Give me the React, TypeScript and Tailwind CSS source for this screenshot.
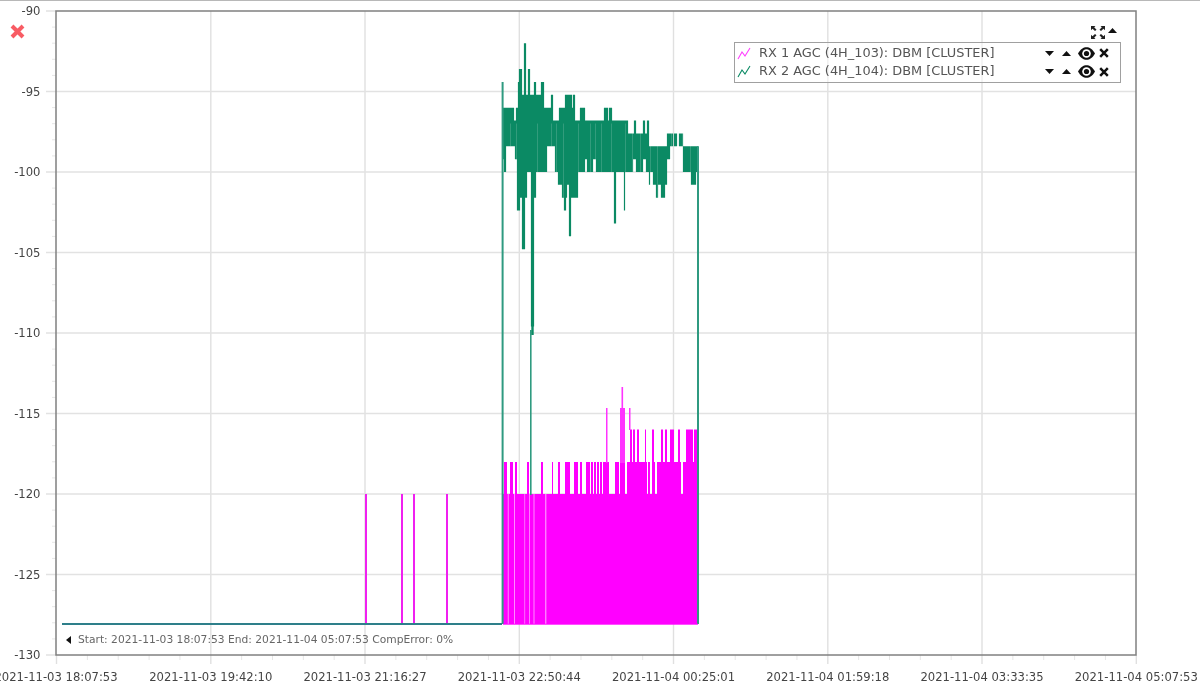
import React from "react";

const L = (n: number) => 43.3 + 12.87 * n;
type Span = [number, number, number];

const greenTop: Span[] = [
  [502,503,3],[503,514,5],[514,516,6],[516,518,5],[518,519,3],[519,522,2],[522,524,4],[524,526,0],[526,528,4],[528,530,2],
  [530,534,4],[534,536,3],[536,541,4],[541,544,3],[544,545,5],[545,551,5],[551,553,4],[553,559,6],[559,565,5],[565,572,4],
  [572,573,5],[573,575,4],[575,580,6],[580,585,5],[585,604,6],[604,608,5],[608,609,6],[609,612,5],[612,628,6],[628,634,7],
  [634,636,6],[636,643,7],[643,645,6],[645,647,7],[647,649,6],[649,667,8],[667,673,7],[673,674,8],[674,677,7],[677,679,8],
  [679,683,7],[683,699,8],
];
const greenBottom: Span[] = [
  [503,504,9],[504,506,10],[506,515,8],[515,517,9],[517,520,13],[520,522,12],[522,525,16],[525,527,12],[527,531,10],[531,534,22],
  [534,536,12],[536,538,10],[538,545,10],[545,547,10],[547,555,8],[555,558,10],[558,562,11],[562,564,12],[564,566,13],
  [566,567,12],[567,569,11],[569,571,15],[571,578,12],[578,583,10],[583,585,10],[585,587,9],[587,592,10],[592,593,10],[593,596,9],[596,603,10],[603,614,10],
  [614,616,14],[616,624,10],[624,625,13],[625,631,10],[631,633,10],[633,636,9],[636,643,10],[643,646,9],[646,649,10],[649,650,11],[650,653,10],
  [653,656,11],[656,658,12],[658,661,11],[661,665,12],[665,667,11],[667,670,9],[670,683,8],[683,691,10],[691,696,11],[696,698,10],
];
const lookup = (spans: Span[], x: number, fallback: number) => {
  const s = spans.find((v) => x >= v[0] && x < v[1]);
  return s ? s[2] : fallback;
};

let greenPath = "";
for (let x = 503; x < 698; x++) {
  greenPath += `M${x + 0.5} ${L(lookup(greenTop, x, 6))}V${L(lookup(greenBottom, x, 9))}`;
}

const greenStreaks = [510, 516, 537, 551, 556, 563, 578, 590, 595, 601, 611, 625, 632, 640, 650, 657, 671, 682, 690];

const spikes118: [number, number][] = [
  [504,507],[510,513],[515,517],[527,529],[541,543],[552,553],[558,560],[565,570],[574,578],[580,582],[586,590],[591,593],[594,596],
  [597,599],[600,602],[603,609],[615,619],[620,625],[627,647],[648,650],[652,655],[657,681],[683,698],
];
const spikes116: [number, number][] = [
  [630,632],[633,635],[637,639],[645,646],[652,654],[661,663],[665,667],[670,674],[678,680],[686,693],[694,697],
];
const magentaGaps: [number, number][] = [
  [507.8,508.6],[514.2,515],[524.5,525.1],[529.2,529.9],[533.6,534.4],[545.3,546.3],
];

const xMajor = [56.5, 210.8, 365, 519.3, 673.5, 827.8, 982, 1136.3];
const xLabels = [
  "2021-11-03 18:07:53","2021-11-03 19:42:10","2021-11-03 21:16:27","2021-11-03 22:50:44",
  "2021-11-04 00:25:01","2021-11-04 01:59:18","2021-11-04 03:33:35","2021-11-04 05:07:53",
];
const yVals = [-90,-95,-100,-105,-110,-115,-120,-125,-130];
const yOf = (i: number) => 11 + i * 80.5;

function Chart() {
  const minorX: number[] = [];
  for (let i = 0; i < 7; i++) for (let j = 1; j < 5; j++) minorX.push(xMajor[i] + (j * (xMajor[i + 1] - xMajor[i])) / 5);
  const minorY: number[] = [];
  for (let i = 0; i < 8; i++) for (let j = 1; j < 5; j++) minorY.push(yOf(i) + j * 16.1);
  return (
    <svg width="1200" height="685" viewBox="0 0 1200 685" className="block font-['DejaVu_Sans',sans-serif]">
      {xMajor.slice(1, -1).map((x) => (
        <line key={x} x1={x} x2={x} y1={11} y2={664} stroke="#e0e0e0" strokeWidth="1.4" />
      ))}
      {yVals.slice(1, -1).map((_, i) => (
        <line key={i} x1={46} x2={1136} y1={yOf(i + 1)} y2={yOf(i + 1)} stroke="#e2e2e2" strokeWidth="1.4" />
      ))}
      <line x1={46} x2={56} y1={11} y2={11} stroke="#e0e0e0" strokeWidth="1.4" />
      <line x1={46} x2={56} y1={655} y2={655} stroke="#e0e0e0" strokeWidth="1.4" />
      {minorY.map((y) => (
        <line key={y} x1={52} x2={56} y1={y} y2={y} stroke="#e6e6e6" />
      ))}
      {minorX.map((x) => (
        <line key={x} x1={x} x2={x} y1={655} y2={660} stroke="#e6e6e6" />
      ))}
      <line x1={56.5} x2={56.5} y1={655} y2={664} stroke="#e0e0e0" strokeWidth="1.4" />
      <line x1={1136.3} x2={1136.3} y1={655} y2={664} stroke="#e0e0e0" strokeWidth="1.4" />

      {/* magenta series */}
      <rect x={503} y={494} width={195} height={130} fill="#ff00ff" />
      {magentaGaps.map(([a, b]) => (
        <rect key={a} x={a} y={494} width={b - a} height={130} fill="#ffb0ff" />
      ))}
      {spikes118.map(([a, b]) => (
        <rect key={a} x={a} y={462} width={b - a} height={32} fill="#ff00ff" />
      ))}
      {spikes116.map(([a, b]) => (
        <rect key={a} x={a} y={429.5} width={b - a} height={33} fill="#ff00ff" />
      ))}
      <rect x={606} y={408} width={1.5} height={55} fill="#ff33ff" />
      <rect x={620} y={408} width={5} height={55} fill="#ff33ff" />
      <rect x={621.5} y={387} width={1.6} height={22} fill="#ff33ff" />
      <rect x={629} y={408} width={1.5} height={22} fill="#ff33ff" />
      {[366, 402, 414, 447].map((x) => (
        <rect key={x} x={x - 1} y={494} width={2} height={130} fill="#f020f0" />
      ))}

      {/* green series */}
      <path d={greenPath} stroke="#0b8a64" strokeWidth="1.2" fill="none" />
      {greenStreaks.map((x) => (
        <line key={x} x1={x + 0.5} x2={x + 0.5} y1={L(6) + 3} y2={L(lookup(greenBottom, x, 9))} stroke="#ffffff" strokeOpacity="0.16" />
      ))}
      <line x1={502.6} x2={502.6} y1={L(3)} y2={624} stroke="#2f9a80" strokeWidth="2" />
      <line x1={698} x2={698} y1={L(8)} y2={624} stroke="#2f9a80" strokeWidth="2" />
      <line x1={530.8} x2={530.8} y1={330} y2={495} stroke="#2f9a80" strokeWidth="1.6" />
      <line x1={532.5} x2={532.5} y1={240} y2={335} stroke="#0b8a64" strokeWidth="2.4" />
      <line x1={62} x2={502} y1={624} y2={624} stroke="#2e7f8a" strokeWidth="2" />
      <line x1={503} x2={698} y1={624.2} y2={624.2} stroke="#ff00ff" strokeWidth="1" />

      {/* frame */}
      <rect x={56} y={11} width={1080} height={644} fill="none" stroke="#808080" strokeWidth="1.5" />

      {yVals.map((v, i) => (
        <text key={v} x={40.5} y={yOf(i) + 4.2} textAnchor="end" fontSize="11.6" fill="#444444">{v}</text>
      ))}
      {xLabels.map((t, i) => (
        <text key={t} x={i === 0 ? 56 : xMajor[i]} y={681} textAnchor="middle" fontSize="11.6" fill="#444444">{t}</text>
      ))}
    </svg>
  );
}

const CaretDown = () => (
  <svg width="9" height="5" viewBox="0 0 9 5" className="block"><path d="M0 0H9L4.5 5Z" fill="#111" /></svg>
);
const CaretUp = () => (
  <svg width="9" height="5" viewBox="0 0 9 5" className="block"><path d="M0 5H9L4.5 0Z" fill="#111" /></svg>
);
const Eye = () => (
  <svg width="17" height="13" viewBox="0 0 17 13" className="block">
    <path d="M0 6.5C2.5 2 5.5 0.2 8.5 0.2S14.5 2 17 6.5C14.5 11 11.5 12.8 8.5 12.8S2.5 11 0 6.5Z" fill="#111" />
    <circle cx="8.5" cy="6.5" r="4.3" fill="#fff" />
    <circle cx="8.5" cy="6.5" r="2.6" fill="#111" />
  </svg>
);
const Cross = () => (
  <svg width="10" height="10" viewBox="0 0 10 10" className="block">
    <path d="M1.2 1.2L8.8 8.8M8.8 1.2L1.2 8.8" stroke="#111" strokeWidth="2.5" />
  </svg>
);
const Expand = () => (
  <svg width="14" height="13" viewBox="0 0 14 13" className="block">
    <path d="M0 0H4.5L3.2 1.3L5.5 3.8L4 5L1.5 2.8L0 4.2ZM14 0H9.5L10.8 1.3L8.5 3.8L10 5L12.5 2.8L14 4.2ZM0 13H4.5L3.2 11.7L5.5 9.2L4 8L1.5 10.2L0 8.8ZM14 13H9.5L10.8 11.7L8.5 9.2L10 8L12.5 10.2L14 8.8Z" fill="#222" />
  </svg>
);
const Spark = ({ color }: { color: string }) => (
  <svg width="14" height="13" viewBox="0 0 14 13" className="block">
    <path d="M1 12L5 5L8 9L13 1" fill="none" stroke={color} strokeWidth="1.1" />
  </svg>
);

function LegendRow({ color, label }: { color: string; label: string }) {
  return (
    <div className="flex h-[18.5px] items-center">
      <div className="ml-[2px] w-[22px]"><Spark color={color} /></div>
      <span className="w-[286px] whitespace-nowrap text-[12.9px] leading-none text-[#555555]">{label}</span>
      <div className="flex w-[17px]"><CaretDown /></div>
      <div className="flex w-[16px]"><CaretUp /></div>
      <div className="mr-[4px]"><Eye /></div>
      <Cross />
    </div>
  );
}

export default function App() {
  return (
    <div className="relative h-[685px] w-[1200px] overflow-hidden bg-white blur-[0.4px] font-['DejaVu_Sans',sans-serif]">
      <div className="absolute left-0 top-0"><Chart /></div>
      <div className="absolute left-0 top-0 h-px w-full bg-[#b8b8b8]" />
      <svg width="15" height="15" viewBox="0 0 15 15" className="absolute left-[10px] top-[24px]">
        <path d="M2 2L13 13M13 2L2 13" stroke="#f85c64" strokeWidth="4" />
      </svg>
      <div className="absolute left-[1091px] top-[26px] flex items-start gap-[3px]">
        <Expand />
        <div className="mt-[2px]"><CaretUp /></div>
      </div>
      <div className="absolute left-[734px] top-[42px] w-[387px] border border-[#a0a0a0] bg-white/50 py-px">
        <LegendRow color="#ff40ff" label="RX 1 AGC (4H_103): DBM [CLUSTER]" />
        <LegendRow color="#0b8a64" label="RX 2 AGC (4H_104): DBM [CLUSTER]" />
      </div>
      <div className="absolute left-[66px] top-[633px] flex items-center gap-[7px]">
        <svg width="5" height="8" viewBox="0 0 5 8" className="block"><path d="M5 0V8L0 4Z" fill="#111" /></svg>
        <span className="whitespace-nowrap text-[10.7px] leading-[14px] text-[#666666]">Start: 2021-11-03 18:07:53 End: 2021-11-04 05:07:53 CompError: 0%</span>
      </div>
    </div>
  );
}
